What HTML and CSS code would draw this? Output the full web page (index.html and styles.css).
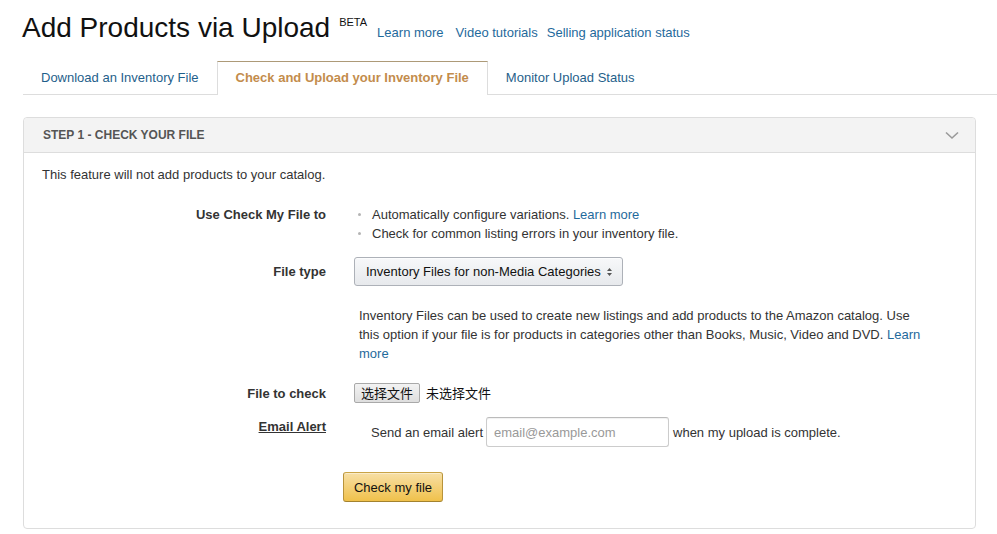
FILE: index.html
```html
<!DOCTYPE html>
<html>
<head>
<meta charset="utf-8">
<link rel="stylesheet" href="styles.css">
</head>
<body>
<div class="page">
  <div class="title-row">
    <h1 class="title">Add Products via Upload</h1>
    <sup class="beta">BETA</sup>
    <a class="link l1" href="#">Learn more</a>
    <a class="link l2" href="#">Video tutorials</a>
    <a class="link l3" href="#">Selling application status</a>
  </div>

  <div class="tabs">
    <div class="tab">Download an Inventory File</div>
    <div class="tab active">Check and Upload your Inventory File</div>
    <div class="tab">Monitor Upload Status</div>
  </div>

  <div class="panel">
    <div class="panel-head">
      <span class="step">STEP 1 - CHECK YOUR FILE</span>
      <svg class="chev" width="14" height="9" viewBox="0 0 14 9"><path d="M1 1.5 L7 7 L13 1.5" fill="none" stroke="#9a9a9a" stroke-width="1.6"/></svg>
    </div>
    <div class="panel-body">
      <p class="intro">This feature will not add products to your catalog.</p>

      <div class="row r1">
        <div class="label">Use Check My File to</div>
        <ul class="bullets">
          <li>Automatically configure variations. <a class="link" href="#">Learn more</a></li>
          <li>Check for common listing errors in your inventory file.</li>
        </ul>
      </div>

      <div class="row r2 center">
        <div class="label">File type</div>
        <div class="select">
          <span>Inventory Files for non-Media Categories</span>
          <svg width="7" height="10" viewBox="0 0 7 10"><path d="M3.5 1 L6 4 H1 Z M3.5 9 L6 6 H1 Z" fill="#555"/></svg>
        </div>
      </div>

      <div class="row r3">
        <div class="label"></div>
        <p class="desc">Inventory Files can be used to create new listings and add products to the Amazon catalog. Use this option if your file is for products in categories other than Books, Music, Video and DVD. <a class="link" href="#">Learn more</a></p>
      </div>

      <div class="row r4 center">
        <div class="label">File to check</div>
        <div class="file">
          <button class="file-btn">选择文件</button>
          <span class="file-none">未选择文件</span>
        </div>
      </div>

      <div class="row r5">
        <div class="label"><span class="u">Email Alert</span></div>
        <div class="email">
          <span>Send an email alert</span>
          <input class="email-input" type="text" placeholder="email@example.com">
          <span>when my upload is complete.</span>
        </div>
      </div>

      <div class="row r6">
        <div class="label"></div>
        <button class="primary">Check my file</button>
      </div>
    </div>
  </div>
</div>
</body>
</html>
```

FILE: styles.css
```css
html, body {
  margin: 0;
  padding: 0;
  background: #fff;
}
body {
  font-family: "Liberation Sans", Arial, sans-serif;
  font-size: 13px;
  color: #333;
}
.page {
  padding: 12px 0 0 23px;
}
.title-row {
  display: flex;
  align-items: baseline;
  height: 32px;
}
.title {
  margin: 0 0 0 -1px;
  font-size: 28px;
  font-weight: normal;
  line-height: 32px;
  color: #111;
}
.beta {
  font-size: 11px;
  margin-left: 9px;
  position: relative;
  top: -11px;
  color: #111;
  vertical-align: baseline;
}
.link {
  color: #1f6a9c;
  text-decoration: none;
}
.title-row .link {
  font-size: 13px;
  position: relative;
  top: 0;
}
.l1 { margin-left: 10px; }
.l2 { margin-left: 12px; }
.l3 { margin-left: 9px; }

.tabs {
  display: flex;
  margin-top: 17px;
  border-bottom: 1px solid #ddd;
  height: 33px;
}
.tab {
  height: 33px;
  box-sizing: border-box;
  padding: 0 17px;
  line-height: 32px;
  border: 1px solid transparent;
  border-bottom: none;
  color: #1f5f8b;
}
.tab.active {
  padding: 0 18px;
  background: #fff;
  border-color: #ddd;
  border-top: 1px solid #ad9a78;
  height: 34px;
  margin-bottom: -1px;
  color: #c38c4c;
  font-weight: bold;
  position: relative;
}

.panel {
  margin: 22px 21px 0 0;
  border: 1px solid #ddd;
  border-radius: 4px;
  background: #fff;
}
.panel-head {
  height: 34px;
  background: #f3f3f3;
  border-bottom: 1px solid #ddd;
  border-radius: 4px 4px 0 0;
  display: flex;
  align-items: center;
  justify-content: space-between;
  padding: 0 16px 0 19px;
}
.step {
  font-size: 12px;
  font-weight: bold;
  color: #555;
}
.chev {
  display: block;
}
.panel-body {
  padding: 12px 18px 26px 18px;
}
.intro {
  margin: 0;
  line-height: 19px;
  color: #333;
}
.row {
  display: flex;
  align-items: flex-start;
}
.row.center {
  align-items: center;
}
.label {
  width: 284px;
  flex: none;
  margin-right: 28px;
  text-align: right;
  font-weight: bold;
  color: #333;
  line-height: 19px;
}
.u {
  text-decoration: underline;
}
.r1 { margin-top: 21px; }
.r2 { margin-top: 14px; }
.r3 { margin-top: 20px; }
.r4 { margin-top: 20px; }
.r5 { margin-top: 14px; }
.r6 { margin-top: 25px; }

.bullets {
  list-style: none;
  margin: 0;
  padding: 0;
  line-height: 19px;
}
.bullets li {
  position: relative;
  padding-left: 18px;
}
.bullets li::before {
  content: "";
  position: absolute;
  left: 4px;
  top: 8px;
  width: 3px;
  height: 3px;
  border-radius: 50%;
  background: #b4b4b4;
}

.select {
  box-sizing: border-box;
  width: 269px;
  height: 29px;
  border: 1px solid #adb1b8;
  border-radius: 3px;
  background: linear-gradient(#f7f8fa, #e7e9ec);
  display: flex;
  align-items: center;
  justify-content: space-between;
  padding: 0 9px 0 11px;
  color: #111;
  box-shadow: 0 1px 0 rgba(255,255,255,.6) inset;
}

.desc {
  margin: 0 0 0 5px;
  width: 568px;
  line-height: 19px;
  color: #333;
}

.file {
  display: flex;
  align-items: center;
}
.file-btn {
  box-sizing: border-box;
  height: 20px;
  padding: 0 6px;
  border: 1px solid #a9a9a9;
  border-radius: 2px;
  background: linear-gradient(#f3f3f3, #dedede);
  font-family: "Noto Sans CJK SC", sans-serif;
  font-size: 13px;
  line-height: 18px;
  color: #111;
  margin: 0;
}
.file-none {
  margin-left: 6px;
  font-family: "Noto Sans CJK SC", sans-serif;
  font-size: 13px;
  color: #111;
  line-height: 20px;
}

.email {
  display: flex;
  align-items: center;
  margin-left: 17px;
  color: #333;
}
.email-input {
  box-sizing: border-box;
  width: 183px;
  height: 30px;
  margin: 0 4px 0 3px;
  padding: 0 7px;
  border: 1px solid #ccc;
  border-top-color: #bbb;
  border-radius: 3px;
  font-family: "Liberation Sans", Arial, sans-serif;
  font-size: 13px;
  color: #111;
  box-shadow: 0 1px 1px rgba(0,0,0,.06) inset;
}
.email-input::placeholder {
  color: #999;
}

.primary {
  margin: 0 0 0 -11px;
  box-sizing: border-box;
  width: 100px;
  height: 30px;
  border: 1px solid;
  border-color: #c9a446 #b8933a #a3822f;
  border-radius: 3px;
  background: linear-gradient(#f7dfa5, #f0c14b);
  font-family: "Liberation Sans", Arial, sans-serif;
  font-size: 13px;
  color: #111;
  padding: 0;
  box-shadow: 0 1px 0 rgba(255,255,255,.4) inset;
}
```
